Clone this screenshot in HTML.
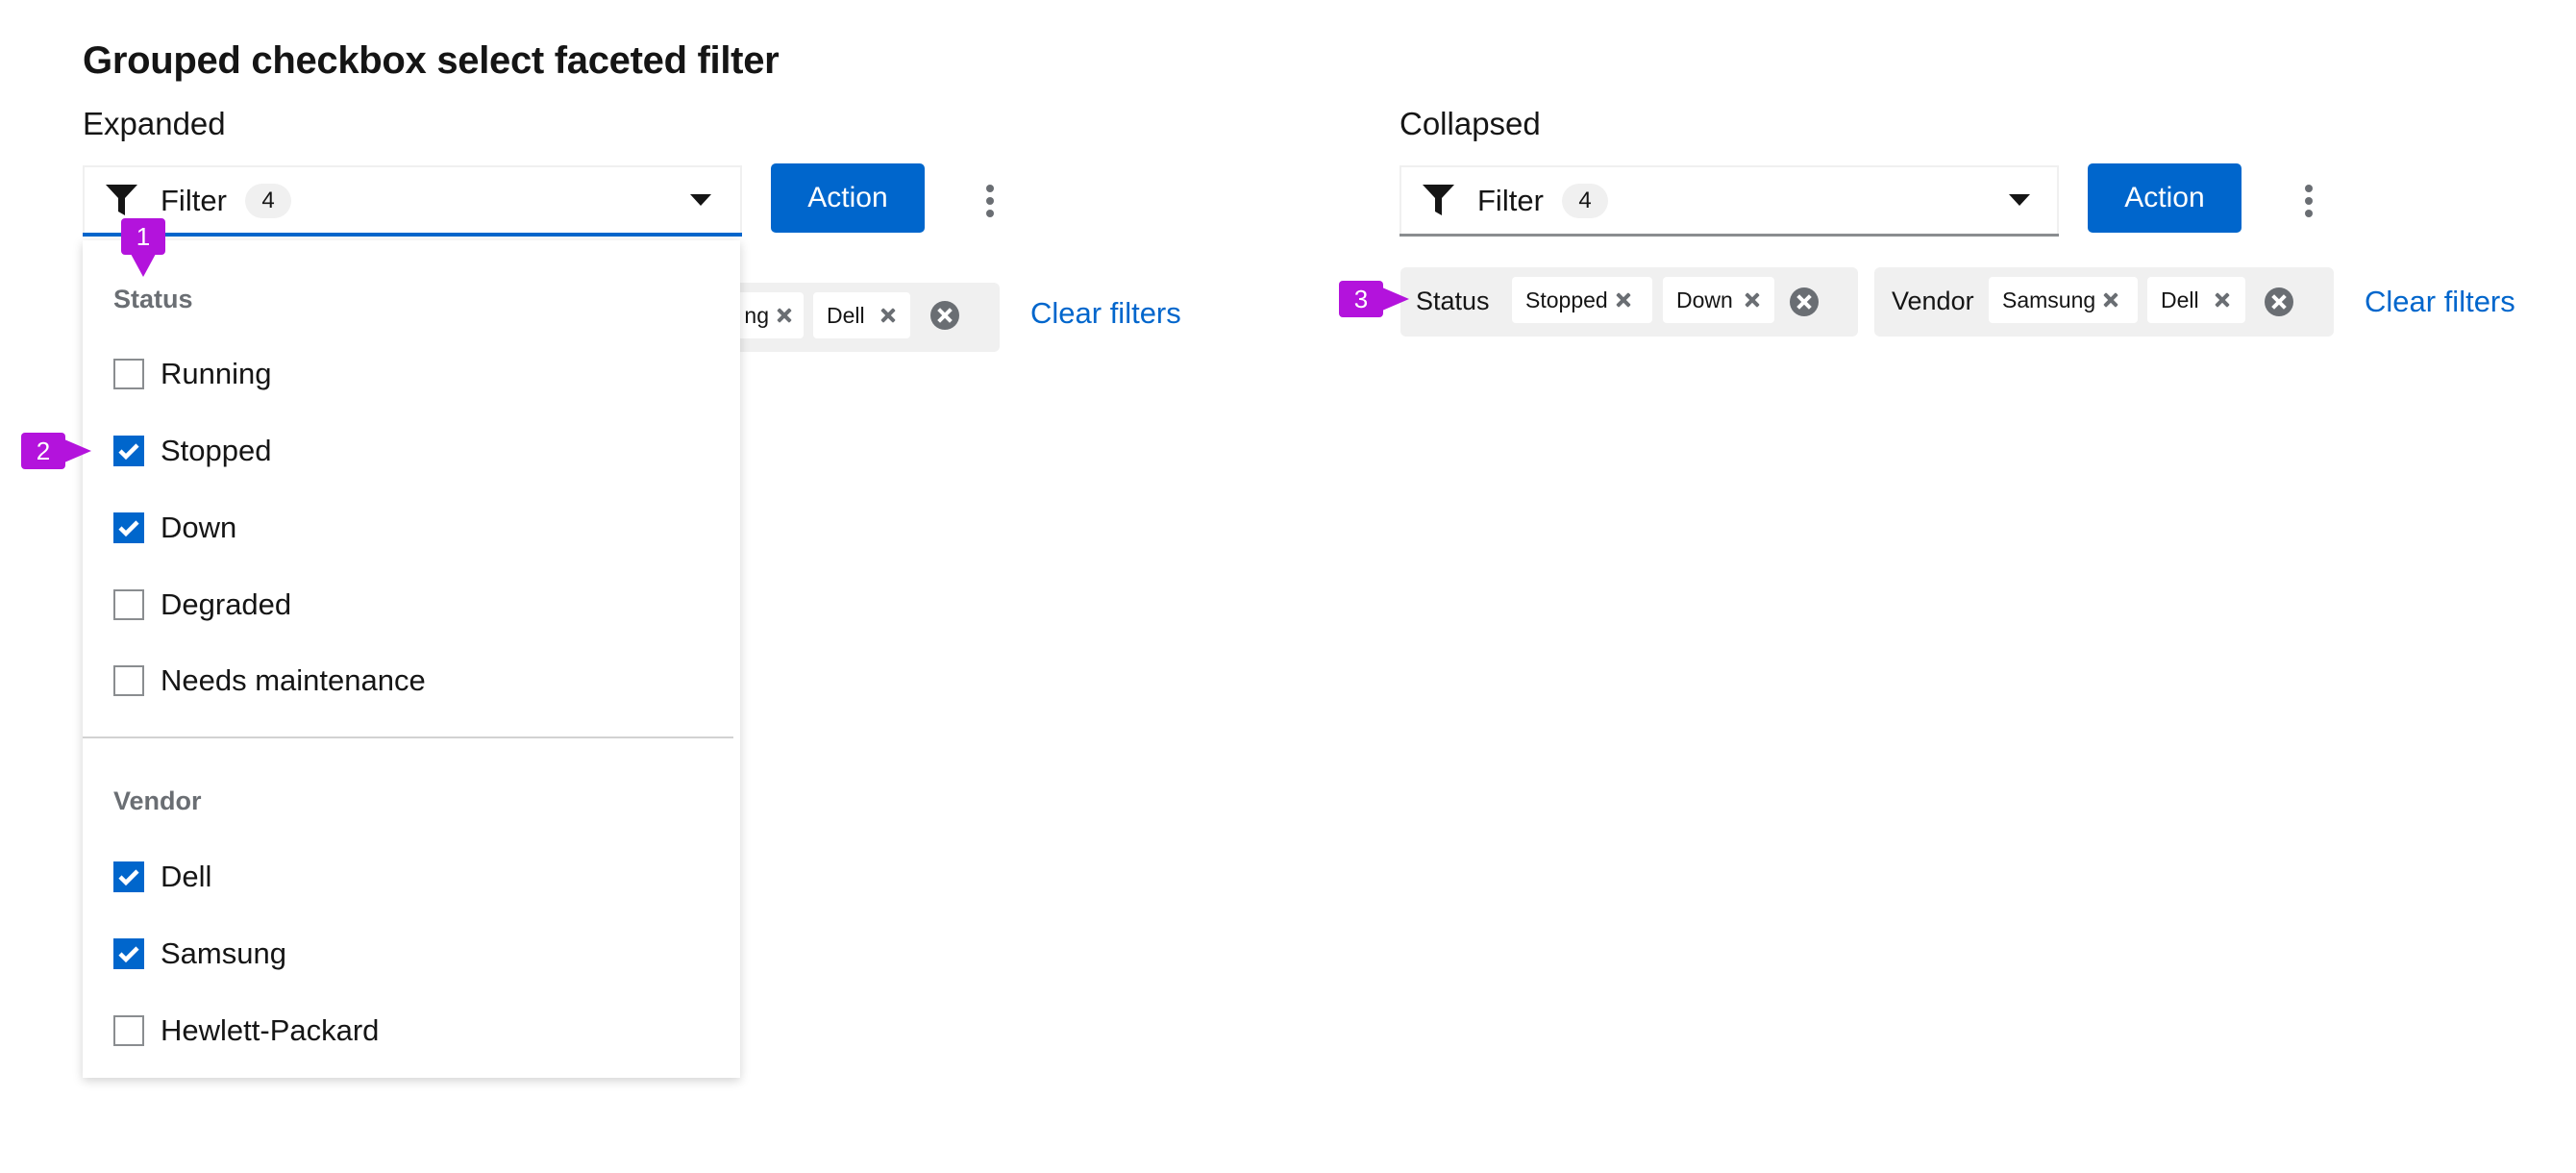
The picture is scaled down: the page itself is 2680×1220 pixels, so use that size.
<!DOCTYPE html>
<html><head><meta charset="utf-8">
<style>
*{box-sizing:border-box;margin:0;padding:0}
body{width:2680px;height:1220px;background:#fff;font-family:"Liberation Sans",sans-serif;color:#151515;position:relative;overflow:hidden}
.a{position:absolute}
.t{white-space:nowrap;line-height:1}
.toggle{position:absolute;width:686px;height:74px;border:2px solid #f0f0f0;border-bottom:none;background:#fff}
.toggle .line{position:absolute;left:-2px;right:-2px;bottom:0;height:3px;background:#8a8d90}
.btn{position:absolute;width:160px;height:72px;background:#0066cc;border-radius:5px;color:#fff;font-size:30px;display:flex;align-items:center;justify-content:center}
.badge{position:absolute;height:36px;width:48px;border-radius:18px;background:#f0f0f0;font-size:24px;display:flex;align-items:center;justify-content:center}
.kebab{position:absolute;width:8px}
.kebab i{display:block;width:8px;height:8px;border-radius:50%;background:#6a6e73;margin-bottom:5px}
.group{position:absolute;background:#f0f0f0;border-radius:6px;height:72px}
.chip{position:absolute;background:#fff;border-radius:4px;height:48px;top:10px;font-size:23px;display:flex;align-items:center;padding-left:14px}
.x{display:inline-block;margin-left:8px;width:16px;height:16px;position:relative}
.x:before,.x:after{content:"";position:absolute;left:6px;top:-1px;width:4px;height:18px;background:#6a6e73;border-radius:1px;transform:rotate(45deg)}
.x:after{transform:rotate(-45deg)}
.cc{position:absolute;width:30px;height:30px;border-radius:50%;background:#6a6e73;top:21px}
.cc:before,.cc:after{content:"";position:absolute;left:13px;top:6px;width:4px;height:18px;background:#fff;transform:rotate(45deg)}
.cc:after{transform:rotate(-45deg)}
.lbl{position:absolute;font-size:27px;top:22px}
.cb{position:absolute;left:118px;width:32px;height:32px;border:2px solid #8a8d90;background:#fff}
.cb.on{background:#0066cc;border-color:#0066cc}
.item{position:absolute;left:167px;font-size:31px}
.hdr{position:absolute;left:118px;font-size:27px;color:#6a6e73;font-weight:bold}
.call{position:absolute;background:#b313dc;color:#fff;font-size:26px;border-radius:4px;display:flex;align-items:center;justify-content:center}
</style></head><body>

<div class="a t" style="left:86px;top:43px;font-size:40px;font-weight:bold;letter-spacing:-0.3px">Grouped checkbox select faceted filter</div>
<div class="a t" style="left:86px;top:112px;font-size:33px">Expanded</div>
<div class="a t" style="left:1456px;top:112px;font-size:33px">Collapsed</div>

<!-- expanded chip group behind menu -->
<div class="group" style="left:700px;top:294px;width:340px"></div>
<div class="chip" style="left:700px;top:304px;width:136px;justify-content:flex-end;padding-right:12px">ng<span class="x"></span></div>
<div class="chip" style="left:846px;top:304px;width:101px">Dell<span class="x" style="margin-left:16px"></span></div>
<div class="cc" style="left:968px;top:313px"></div>
<div class="a t" style="left:1072px;top:310px;font-size:31px;color:#0066cc">Clear filters</div>

<!-- expanded toggle -->
<div class="toggle" style="left:86px;top:172px">
  <div class="line" style="background:#0066cc;height:4px"></div>
</div>
<svg class="a" style="left:110px;top:192px" width="33" height="32" viewBox="0 0 33 32"><path d="M0 0H33L20 14V32L13 28V14Z" fill="#151515"/></svg>
<div class="a t" style="left:167px;top:193px;font-size:31px">Filter</div>
<div class="badge" style="left:255px;top:191px">4</div>
<svg class="a" style="left:718px;top:202px" width="22" height="12"><path d="M0 0H22L11 12Z" fill="#151515"/></svg>
<div class="btn" style="left:802px;top:170px">Action</div>
<div class="kebab" style="left:1026px;top:192px"><i></i><i></i><i></i></div>

<!-- menu -->
<div class="a" style="left:86px;top:250px;width:684px;height:871px;background:#fff;box-shadow:0 3px 10px rgba(3,3,3,0.18)"></div>
<div class="hdr t" style="top:298px">Status</div>
<div class="cb" style="top:373px"></div><div class="item t" style="top:373px">Running</div>
<div class="cb on" style="top:453px"><svg width="28" height="28" viewBox="0 0 28 28"><path d="M5 14L11 20L23 8" stroke="#fff" stroke-width="4.5" fill="none"/></svg></div><div class="item t" style="top:453px">Stopped</div>
<div class="cb on" style="top:533px"><svg width="28" height="28" viewBox="0 0 28 28"><path d="M5 14L11 20L23 8" stroke="#fff" stroke-width="4.5" fill="none"/></svg></div><div class="item t" style="top:533px">Down</div>
<div class="cb" style="top:613px"></div><div class="item t" style="top:613px">Degraded</div>
<div class="cb" style="top:692px"></div><div class="item t" style="top:692px">Needs maintenance</div>
<div class="a" style="left:86px;top:766px;width:677px;height:2px;background:#d2d2d2"></div>
<div class="hdr t" style="top:820px">Vendor</div>
<div class="cb on" style="top:896px"><svg width="28" height="28" viewBox="0 0 28 28"><path d="M5 14L11 20L23 8" stroke="#fff" stroke-width="4.5" fill="none"/></svg></div><div class="item t" style="top:896px">Dell</div>
<div class="cb on" style="top:976px"><svg width="28" height="28" viewBox="0 0 28 28"><path d="M5 14L11 20L23 8" stroke="#fff" stroke-width="4.5" fill="none"/></svg></div><div class="item t" style="top:976px">Samsung</div>
<div class="cb" style="top:1056px"></div><div class="item t" style="top:1056px">Hewlett-Packard</div>

<!-- collapsed -->
<div class="toggle" style="left:1456px;top:172px"><div class="line"></div></div>
<svg class="a" style="left:1480px;top:192px" width="33" height="32" viewBox="0 0 33 32"><path d="M0 0H33L20 14V32L13 28V14Z" fill="#151515"/></svg>
<div class="a t" style="left:1537px;top:193px;font-size:31px">Filter</div>
<div class="badge" style="left:1625px;top:191px">4</div>
<svg class="a" style="left:2090px;top:202px" width="22" height="12"><path d="M0 0H22L11 12Z" fill="#151515"/></svg>
<div class="btn" style="left:2172px;top:170px">Action</div>
<div class="kebab" style="left:2398px;top:192px"><i></i><i></i><i></i></div>

<div class="group" style="left:1457px;top:278px;width:476px">
  <div class="lbl t" style="left:16px">Status</div>
  <div class="chip" style="left:116px;width:146px">Stopped<span class="x"></span></div>
  <div class="chip" style="left:273px;width:116px">Down<span class="x" style="margin-left:12px"></span></div>
  <div class="cc" style="left:405px"></div>
</div>
<div class="group" style="left:1950px;top:278px;width:478px">
  <div class="lbl t" style="left:18px">Vendor</div>
  <div class="chip" style="left:119px;width:155px">Samsung<span class="x"></span></div>
  <div class="chip" style="left:284px;width:102px">Dell<span class="x" style="margin-left:16px"></span></div>
  <div class="cc" style="left:406px"></div>
</div>
<div class="a t" style="left:2460px;top:298px;font-size:31px;color:#0066cc">Clear filters</div>

<!-- callouts -->
<div class="call" style="left:126px;top:227px;width:46px;height:38px">1</div>
<svg class="a" style="left:136px;top:264px" width="26" height="24"><path d="M0 0H26L13 24Z" fill="#b313dc"/></svg>
<div class="call" style="left:22px;top:450px;width:46px;height:38px">2</div>
<svg class="a" style="left:67px;top:457px" width="28" height="24"><path d="M0 0L28 12L0 24Z" fill="#b313dc"/></svg>
<div class="call" style="left:1393px;top:292px;width:46px;height:38px">3</div>
<svg class="a" style="left:1438px;top:299px" width="28" height="24"><path d="M0 0L28 12L0 24Z" fill="#b313dc"/></svg>

</body></html>
